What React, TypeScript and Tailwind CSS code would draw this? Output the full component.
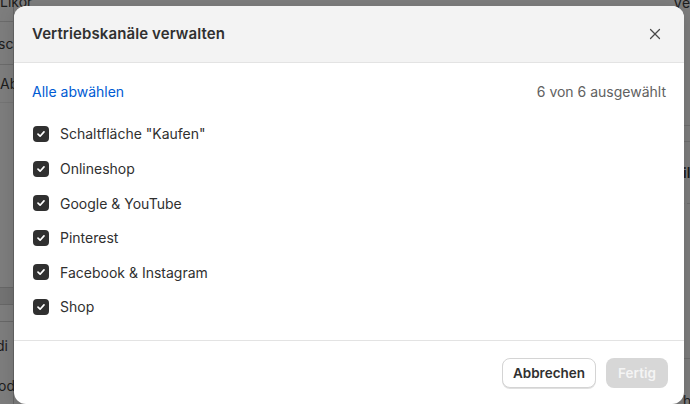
import { X } from 'lucide-react';

const channels = [
  'Schaltfläche "Kaufen"',
  'Onlineshop',
  'Google & YouTube',
  'Pinterest',
  'Facebook & Instagram',
  'Shop',
];

function CheckBox() {
  return (
    <span className="w-4 h-4 rounded-[4px] bg-[#303030] flex items-center justify-center shrink-0">
      <svg width="10" height="10" viewBox="0 0 10 10" fill="none">
        <path d="M2 5.2 L4.1 7.2 L8 2.9" stroke="white" strokeWidth="1.7" strokeLinecap="round" strokeLinejoin="round" />
      </svg>
    </span>
  );
}

export default function App() {
  return (
    <div
      className="relative w-[690px] h-[404px] overflow-hidden bg-[#7d7d7d] text-[14px] text-[#1c1c1c]"
      style={{ fontFamily: 'Inter, "Noto Sans", sans-serif' }}
    >
      {/* Page behind the overlay */}
      <div className="flex h-full">
        <div className="w-[14px] flex flex-col border-r border-[#666] whitespace-nowrap">
          <div className="h-[22px] border-b border-[#6b6b6b] flex items-end pb-[12px] leading-none">Likör</div>
          <div className="h-[43px] border-b border-[#6b6b6b] flex items-center -ml-[2px]">sc</div>
          <div className="h-[38px] border-b border-[#747474] flex items-center">Ab</div>
          <div className="h-[184px]" />
          <div className="h-[18px] border-y border-[#676767] bg-[#737373]" />
          <div className="h-[17px] border-b border-[#676767]" />
          <div className="h-[46px] flex items-center -ml-[4px]">di</div>
          <div className="h-[34px] flex items-center -ml-[2px]">od</div>
        </div>
        <div className="flex-1" />
        <div className="w-[20px] flex flex-col overflow-hidden whitespace-nowrap">
          <div className="h-[130px] border-b border-[#6e6e6e] pl-[3px] leading-none -mt-[4px]">Ve</div>
          <div className="h-[16px] border-b border-[#6e6e6e]" />
          <div className="h-[62px] border-b border-dashed border-[#6e6e6e] flex items-center pl-[13px] font-semibold">il</div>
          <div className="h-[155px] border-b border-[#6e6e6e]" />
          <div className="flex-1 flex items-end pl-[13px] leading-none -mb-[4px]">h</div>
        </div>
      </div>

      {/* Modal */}
      <div className="absolute left-[14px] top-[6px] w-[670px] h-[398px] bg-white rounded-xl overflow-hidden flex flex-col shadow-[0_4px_16px_rgba(0,0,0,0.15)]">
        <div className="h-[57px] bg-[#f3f3f3] border-b border-[#e3e3e3] flex items-center justify-between pl-[18px] pr-[20px] shrink-0">
          <h2 className="text-[15px] font-semibold text-[#303030] tracking-[0.1px]">Vertriebskanäle verwalten</h2>
          <X size={18} strokeWidth={1.6} className="text-[#4a4a4a]" />
        </div>

        <div className="flex-1 px-[18px] pt-[18px]">
          <div className="flex items-center justify-between h-5">
            <span className="text-[#005bd3]">Alle abwählen</span>
            <span className="text-[#616161]">6 von 6 ausgewählt</span>
          </div>
          <div className="mt-[15.7px] flex flex-col">
            {channels.map((c) => (
              <label key={c} className="h-[34.6px] flex items-center gap-[11px] pl-px text-[#303030]">
                <CheckBox />
                <span>{c}</span>
              </label>
            ))}
          </div>
        </div>

        <div className="h-[64px] border-t border-[#e3e3e3] flex items-start justify-end gap-[10px] pt-[17px] pr-[16px] shrink-0">
          <button className="h-[30px] w-[94px] rounded-lg border border-[#d4d4d4] bg-white shadow-[0_1px_0_rgba(0,0,0,0.12)] text-[13.5px] font-semibold text-[#303030]">
            Abbrechen
          </button>
          <button className="h-[30px] w-[62px] rounded-lg bg-[#d7d7d7] text-[13.5px] font-semibold text-[#f4f4f4]">
            Fertig
          </button>
        </div>
      </div>
    </div>
  );
}
